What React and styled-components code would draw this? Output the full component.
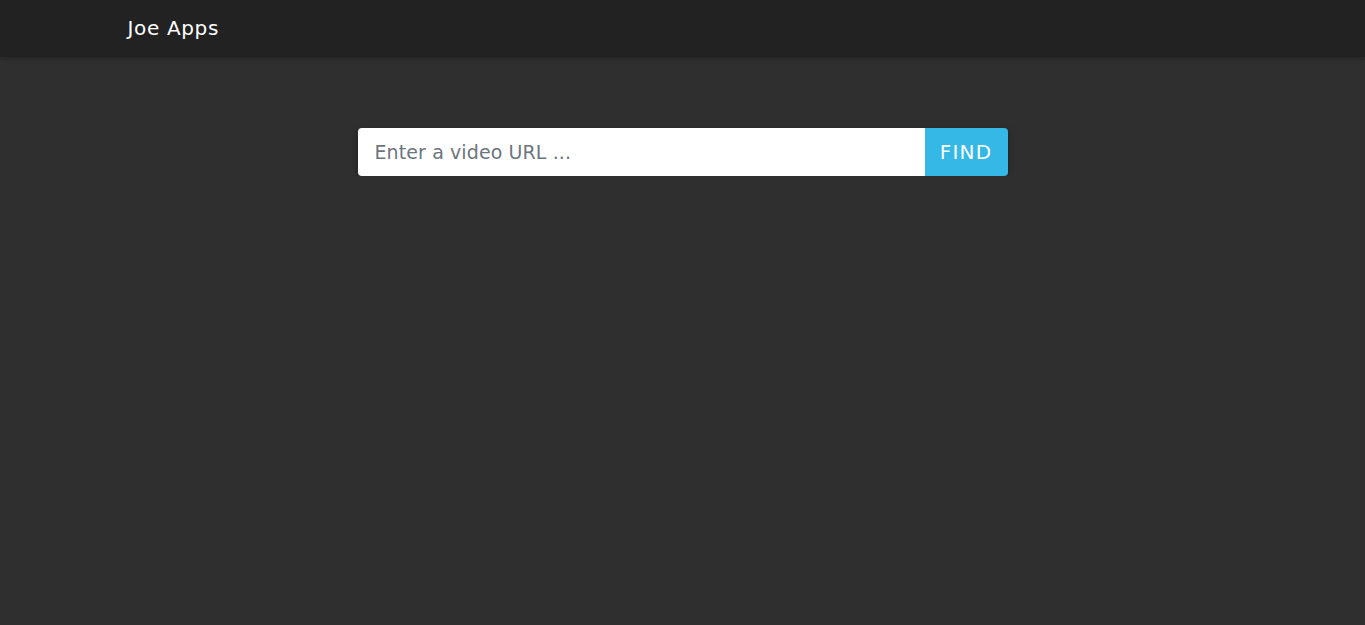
import React from "react";
import styled, { createGlobalStyle } from "styled-components";

const GlobalStyle = createGlobalStyle`
  html, body {
    margin: 0;
    padding: 0;
    background-color: #2f2f2f;
    font-family: "DejaVu Sans", "Liberation Sans", sans-serif;
  }
  * { box-sizing: border-box; }
`;

const Navbar = styled.nav`
  height: 57px;
  background-color: #222222;
  box-shadow: 0 2px 4px rgba(0, 0, 0, 0.2);
  display: flex;
  align-items: center;
`;

const Container = styled.div`
  width: 1140px;
  margin: 0 auto;
  padding: 0 15px;
`;

const Brand = styled.a`
  color: #fff;
  font-size: 20px;
  letter-spacing: 0.65px;
  text-decoration: none;
  position: relative;
  top: -1px;
`;

const Main = styled.main`
  display: flex;
  justify-content: center;
  padding-top: 71px;
`;

const SearchForm = styled.form`
  display: flex;
  width: 650px;
  height: 48px;
  border-radius: 4px;
  box-shadow: 0 2px 6px rgba(0, 0, 0, 0.3);
`;

const Input = styled.input`
  flex: 1;
  border: none;
  outline: none;
  border-radius: 4px 0 0 4px;
  padding: 0 17px;
  font-family: inherit;
  font-size: 19px;
  letter-spacing: 0.1px;
  color: #495057;
  background: #fff;

  &::placeholder {
    color: #6c757d;
  }
`;

const FindButton = styled.button`
  width: 83px;
  padding: 0;
  border: none;
  border-radius: 0 4px 4px 0;
  background-color: #35b8e6;
  color: #fff;
  font-family: inherit;
  font-size: 20px;
  letter-spacing: 1.2px;
  cursor: pointer;
`;

export default function App() {
  return (
    <>
      <GlobalStyle />
      <Navbar>
        <Container>
          <Brand href="#">Joe Apps</Brand>
        </Container>
      </Navbar>
      <Main>
        <SearchForm onSubmit={(e) => e.preventDefault()}>
          <Input placeholder="Enter a video URL ..." />
          <FindButton type="submit">FIND</FindButton>
        </SearchForm>
      </Main>
    </>
  );
}
